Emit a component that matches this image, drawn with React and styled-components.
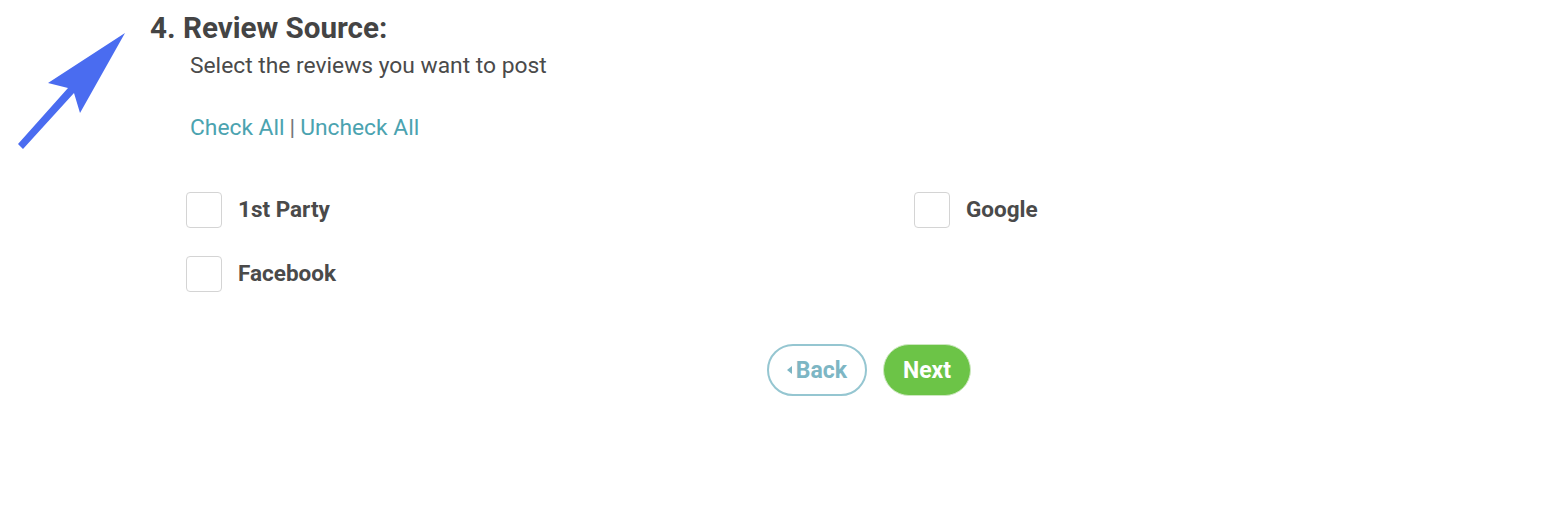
import React from "react";
import styled, { createGlobalStyle } from "styled-components";

const Global = createGlobalStyle`
  html, body { margin: 0; padding: 0; background: #fff; }
  body { font-family: Roboto, "Noto Sans", "Liberation Sans", sans-serif; }
`;

const Page = styled.div`
  position: relative;
  width: 1568px;
  height: 516px;
  box-sizing: border-box;
  padding: 10px 0 0 150px;
`;

const Arrow = styled.svg`
  position: absolute;
  left: 0;
  top: 0;
`;

const Title = styled.h2`
  margin: 0;
  font-size: 29.6px;
  line-height: 36px;
  font-weight: 700;
  color: #444;
`;

const Body = styled.div`
  padding-left: 40px;
`;

const Subtitle = styled.p`
  margin: 6px 0 0;
  font-size: 22.8px;
  line-height: 28px;
  color: #4a4a4a;
`;

const Links = styled.div`
  margin-top: 34px;
  font-size: 22.8px;
  line-height: 28px;
  color: #666;
`;

const LinkText = styled.a`
  color: #4ba3b0;
  text-decoration: none;
  cursor: pointer;
`;

const Sep = styled.span`
  color: #777;
  margin: 0 5px;
`;

const Grid = styled.div`
  margin: 50px 0 0 -4px;
  display: grid;
  grid-template-columns: 728px 1fr;
  row-gap: 28px;
`;

const Option = styled.label`
  display: flex;
  align-items: center;
  gap: 16px;
  font-size: 22.5px;
  font-weight: 700;
  color: #4a4a4a;
  cursor: pointer;
`;

const LabelText = styled.span`
  padding-bottom: 3px;
`;

const Box = styled.span`
  width: 36px;
  height: 36px;
  box-sizing: border-box;
  border: 1.5px solid #d4d4d4;
  border-radius: 4px;
  background: #fff;
  flex: none;
`;

const Buttons = styled.div`
  display: flex;
  gap: 16px;
  margin: 52px 0 0 617px;
`;

const Button = styled.button`
  height: 52px;
  box-sizing: border-box;
  border-radius: 26px;
  font-family: Roboto, "Noto Sans", sans-serif;
  font-size: 23px;
  font-weight: 700;
  display: flex;
  align-items: center;
  justify-content: center;
  gap: 4px;
  padding: 0;
  cursor: pointer;
  ${(p) =>
    p.$primary
      ? `width: 88px; background: #6cc447; color: #fff; border: 1px solid #cde8c0;`
      : `width: 100px; background: #fff; color: #7db6c4; border: 2px solid #95c6d1;`}
`;

const Caret = styled.span`
  display: inline-block;
  width: 0;
  height: 0;
  border-top: 4px solid transparent;
  border-bottom: 4px solid transparent;
  border-right: 5px solid #7db6c4;
`;

const options = ["1st Party", "Google", "Facebook"];

export default function App() {
  return (
    <>
      <Global />
      <Page>
        <Arrow width="140" height="160" viewBox="0 0 140 160">
          <polygon
            points="125,33 80,113 74,93 23,149 18,144 68,88 48,83"
            fill="#4a6cf0"
          />
        </Arrow>
        <Title>4. Review Source:</Title>
        <Body>
          <Subtitle>Select the reviews you want to post</Subtitle>
          <Links>
            <LinkText>Check All</LinkText>
            <Sep>|</Sep>
            <LinkText>Uncheck All</LinkText>
          </Links>
          <Grid>
            {options.map((o) => (
              <Option key={o}>
                <Box />
                <LabelText>{o}</LabelText>
              </Option>
            ))}
          </Grid>
        </Body>
        <Buttons>
          <Button>
            <Caret />
            Back
          </Button>
          <Button $primary>Next</Button>
        </Buttons>
      </Page>
    </>
  );
}
